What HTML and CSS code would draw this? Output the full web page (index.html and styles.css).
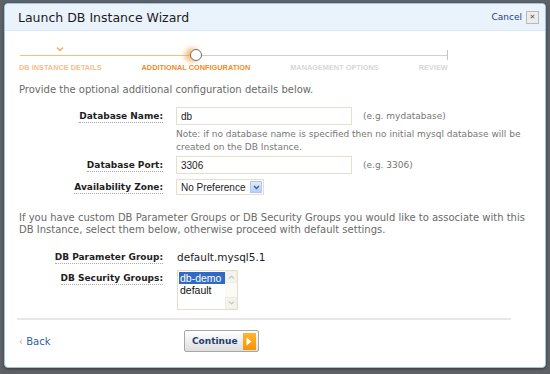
FILE: index.html
```html
<!DOCTYPE html>
<html lang="en">
<head>
<meta charset="UTF-8">
<title>Launch DB Instance Wizard</title>
<link rel="stylesheet" href="styles.css">
</head>
<body>
<div class="dialog">
  <div class="dialog-head">
    <h1>Launch DB Instance Wizard</h1>
    <a class="cancel" href="#">Cancel <span class="close-box">&#x2715;</span></a>
  </div>

  <div class="dialog-body">
    <!-- wizard progress -->
    <div class="steps">
      <div class="step done">
        <span class="marker"><svg width="8" height="6" viewBox="0 0 8 6"><path d="M1 1.5 L4 4.5 L7 1.5" fill="none" stroke="#f0a860" stroke-width="1.4"/></svg></span>
        <span class="step-name">DB Instance Details</span>
      </div>
      <div class="step current">
        <span class="marker"><span class="dot"></span></span>
        <span class="step-name">Additional Configuration</span>
      </div>
      <div class="step">
        <span class="marker"></span>
        <span class="step-name">Management Options</span>
      </div>
      <div class="step">
        <span class="marker"></span>
        <span class="step-name">Review</span>
      </div>
    </div>

    <p class="intro">Provide the optional additional configuration details below.</p>

    <div class="form-grid">
      <label class="field-label"><span>Database Name:</span></label>
      <div class="field">
        <input class="text-input" type="text" value="db">
        <span class="hint">(e.g. mydatabase)</span>
      </div>
      <div></div>
      <p class="note">Note: if no database name is specified then no initial mysql database will be created on the DB Instance.</p>

      <label class="field-label"><span>Database Port:</span></label>
      <div class="field">
        <input class="text-input" type="text" value="3306">
        <span class="hint">(e.g. 3306)</span>
      </div>

      <label class="field-label"><span>Availability Zone:</span></label>
      <div class="field">
        <div class="select">
          <span class="select-text">No Preference</span>
          <span class="select-arrow"><svg width="7" height="5" viewBox="0 0 7 5"><path d="M1 1 L3.5 3.5 L6 1" fill="none" stroke="#3d5fa8" stroke-width="1.5"/></svg></span>
        </div>
      </div>
    </div>

    <p class="intro groups-text">If you have custom DB Parameter Groups or DB Security Groups you would like to associate with this DB Instance, select them below, otherwise proceed with default settings.</p>

    <div class="form-grid groups">
      <label class="field-label"><span>DB Parameter Group:</span></label>
      <div class="field value">default.mysql5.1</div>

      <label class="field-label top"><span>DB Security Groups:</span></label>
      <div class="field">
        <div class="listbox">
          <ul class="options">
            <li class="selected">db-demo</li>
            <li>default</li>
          </ul>
          <div class="scrollbar">
            <span class="scroll-btn"><svg width="7" height="4" viewBox="0 0 7 4"><path d="M1 3.5 L3.5 1 L6 3.5" fill="none" stroke="#c8c8c0" stroke-width="1.2"/></svg></span>
            <span class="scroll-btn"><svg width="7" height="4" viewBox="0 0 7 4"><path d="M1 0.5 L3.5 3 L6 0.5" fill="none" stroke="#c8c8c0" stroke-width="1.2"/></svg></span>
          </div>
        </div>
      </div>
    </div>
  </div>

  <div class="dialog-foot">
    <a class="back" href="#"><span class="back-arrow">&lsaquo;</span> Back</a>
    <button class="continue-btn">Continue <span class="go"><svg width="6" height="9" viewBox="0 0 6 9"><path d="M0.5 0.5 L5.5 4.5 L0.5 8.5 Z" fill="#fff"/></svg></span></button>
  </div>
</div>
</body>
</html>
```

FILE: styles.css
```css
body {
margin: 0;
padding: 3px 4px;
background: #5e6266;
font-family: 'DejaVu Sans', Verdana, sans-serif;
}

.dialog {
width: 540px;
height: 363px;
background: #fff;
border: 1px solid #9fc3e6;
border-radius: 4px;
box-shadow: 0 1px 3px rgba(0, 0, 0, 0.4);
overflow: hidden;
display: flex;
flex-direction: column;
}

.dialog-head {
height: 26px;
background: #eaf2fb;
border-bottom: 1px solid #dbe8f6;
display: flex;
align-items: center;
justify-content: space-between;
padding: 0 6px 0 13px;
}

.dialog-head h1 {
margin: 0;
font-size: 12.5px;
font-weight: normal;
color: #1c1c1c;
}

.cancel {
font-size: 9px;
color: #223d85;
text-decoration: none;
display: flex;
align-items: center;
gap: 4px;
}

.close-box {
width: 11px;
height: 11px;
border: 1px solid #b9b9b9;
background: #ececec;
color: #555;
font-size: 7px;
display: flex;
align-items: center;
justify-content: center;
}

.dialog-body {
padding: 0 14px;
flex: 1;
}

/* progress steps */
.steps {
display: inline-flex;
gap: 40px;
position: relative;
margin-top: 13px;
}

.steps::before {
content: '';
position: absolute;
left: 1px;
right: 0;
top: 11px;
height: 1px;
background: linear-gradient(to right, #f6bd84 0, #f6bd84 176px, #cfcfcf 176px);
}

.steps::after {
content: '';
position: absolute;
right: 0;
top: 6px;
width: 1px;
height: 10px;
background: #c4c4c4;
}

.step {
display: flex;
flex-direction: column;
align-items: center;
}

.marker {
height: 22px;
display: flex;
align-items: center;
justify-content: center;
position: relative;
z-index: 1;
}

.done .marker {
align-items: flex-start;
padding-top: 2px;
height: 20px;
}

.dot {
width: 10px;
height: 10px;
border-radius: 50%;
border: 1px solid #6f6f6f;
background: #fff;
box-shadow: -4px 0 5px 1px rgba(245, 160, 70, 0.7);
}

.step-name {
font-family: 'Liberation Sans', Arial, sans-serif;
font-size: 7.35px;
font-weight: bold;
text-transform: uppercase;
color: #d7d7d7;
margin-top: -3px;
}

.done .step-name {
color: #f5c08c;
}

.current .step-name {
color: #f08c2c;
}

.intro {
margin: 12px 0 0;
font-size: 10px;
color: #6a6a6a;
line-height: 12px;
}

/* form rows */
.form-grid {
display: grid;
grid-template-columns: 144px auto;
column-gap: 13px;
row-gap: 5px;
margin-top: 11px;
align-items: center;
}

.field-label {
text-align: right;
font-size: 9px;
font-weight: bold;
color: #1e1e1e;
}

.field-label span {
border-bottom: 1px dotted #aaa;
padding-bottom: 1px;
}

.field-label.top {
align-self: start;
padding-top: 3px;
}

.field {
display: flex;
align-items: center;
}

.text-input {
width: 176px;
height: 18px;
box-sizing: border-box;
border: 1px solid #e4e0cc;
padding: 0 4px;
font-family: 'Liberation Sans', Arial, sans-serif;
font-size: 10px;
color: #222;
}

.hint {
margin-left: 11px;
font-size: 9px;
color: #777;
}

.note {
margin: -2px 0 -3px;
font-size: 9px;
line-height: 13px;
color: #777;
}

.select {
width: 88px;
height: 16px;
box-sizing: border-box;
border: 1px solid #e4e0cc;
display: flex;
align-items: center;
justify-content: space-between;
padding: 0 1px 0 4px;
font-family: 'Liberation Sans', Arial, sans-serif;
font-size: 10px;
color: #222;
}

.select-arrow {
width: 12px;
height: 12px;
background: linear-gradient(#dfe9fb, #b9cff5);
border: 1px solid #b3c6ef;
box-sizing: border-box;
display: flex;
align-items: center;
justify-content: center;
}

.groups-text {
margin-top: 17px;
}

.groups {
margin-top: 15px;
row-gap: 7px;
}

.value {
font-size: 10.5px;
color: #222;
margin-left: 1px;
}

.listbox {
width: 61px;
height: 40px;
box-sizing: border-box;
border: 1px solid #e4e0cc;
display: flex;
margin-left: 1px;
}

.options {
list-style: none;
margin: 1px 0 0 1px;
padding: 0;
flex: 1;
font-family: 'Liberation Sans', Arial, sans-serif;
font-size: 10.5px;
line-height: 12px;
color: #111;
}

.options li {
padding-left: 1px;
}

.options .selected {
background: #316ac5;
color: #fff;
}

.scrollbar {
width: 12px;
background: #fbfbf6;
display: flex;
flex-direction: column;
justify-content: space-between;
}

.scroll-btn {
height: 12px;
border: 1px solid #eeeee6;
box-sizing: border-box;
display: flex;
align-items: center;
justify-content: center;
background: #f4f4ee;
}

/* footer */
.dialog-foot {
margin: 0 34px 15px 12px;
border-top: 2px solid #e8e8e8;
padding-top: 10px;
display: grid;
grid-template-columns: 167px auto;
align-items: center;
}

.back {
font-size: 10px;
color: #2d62a8;
text-decoration: none;
margin-left: 2px;
}

.back-arrow {
color: #f29a48;
}

.continue-btn {
justify-self: start;
height: 22px;
padding: 0 2px 0 7px;
border: 1px solid #a7a7a7;
border-radius: 2px;
background: linear-gradient(#ffffff, #dedede);
font-family: 'DejaVu Sans', Verdana, sans-serif;
font-size: 9px;
font-weight: bold;
color: #1b3f72;
display: flex;
align-items: center;
gap: 5px;
}

.go {
width: 13px;
height: 17px;
background: linear-gradient(#ffb52e, #f79406);
display: flex;
align-items: center;
justify-content: center;
}
```
